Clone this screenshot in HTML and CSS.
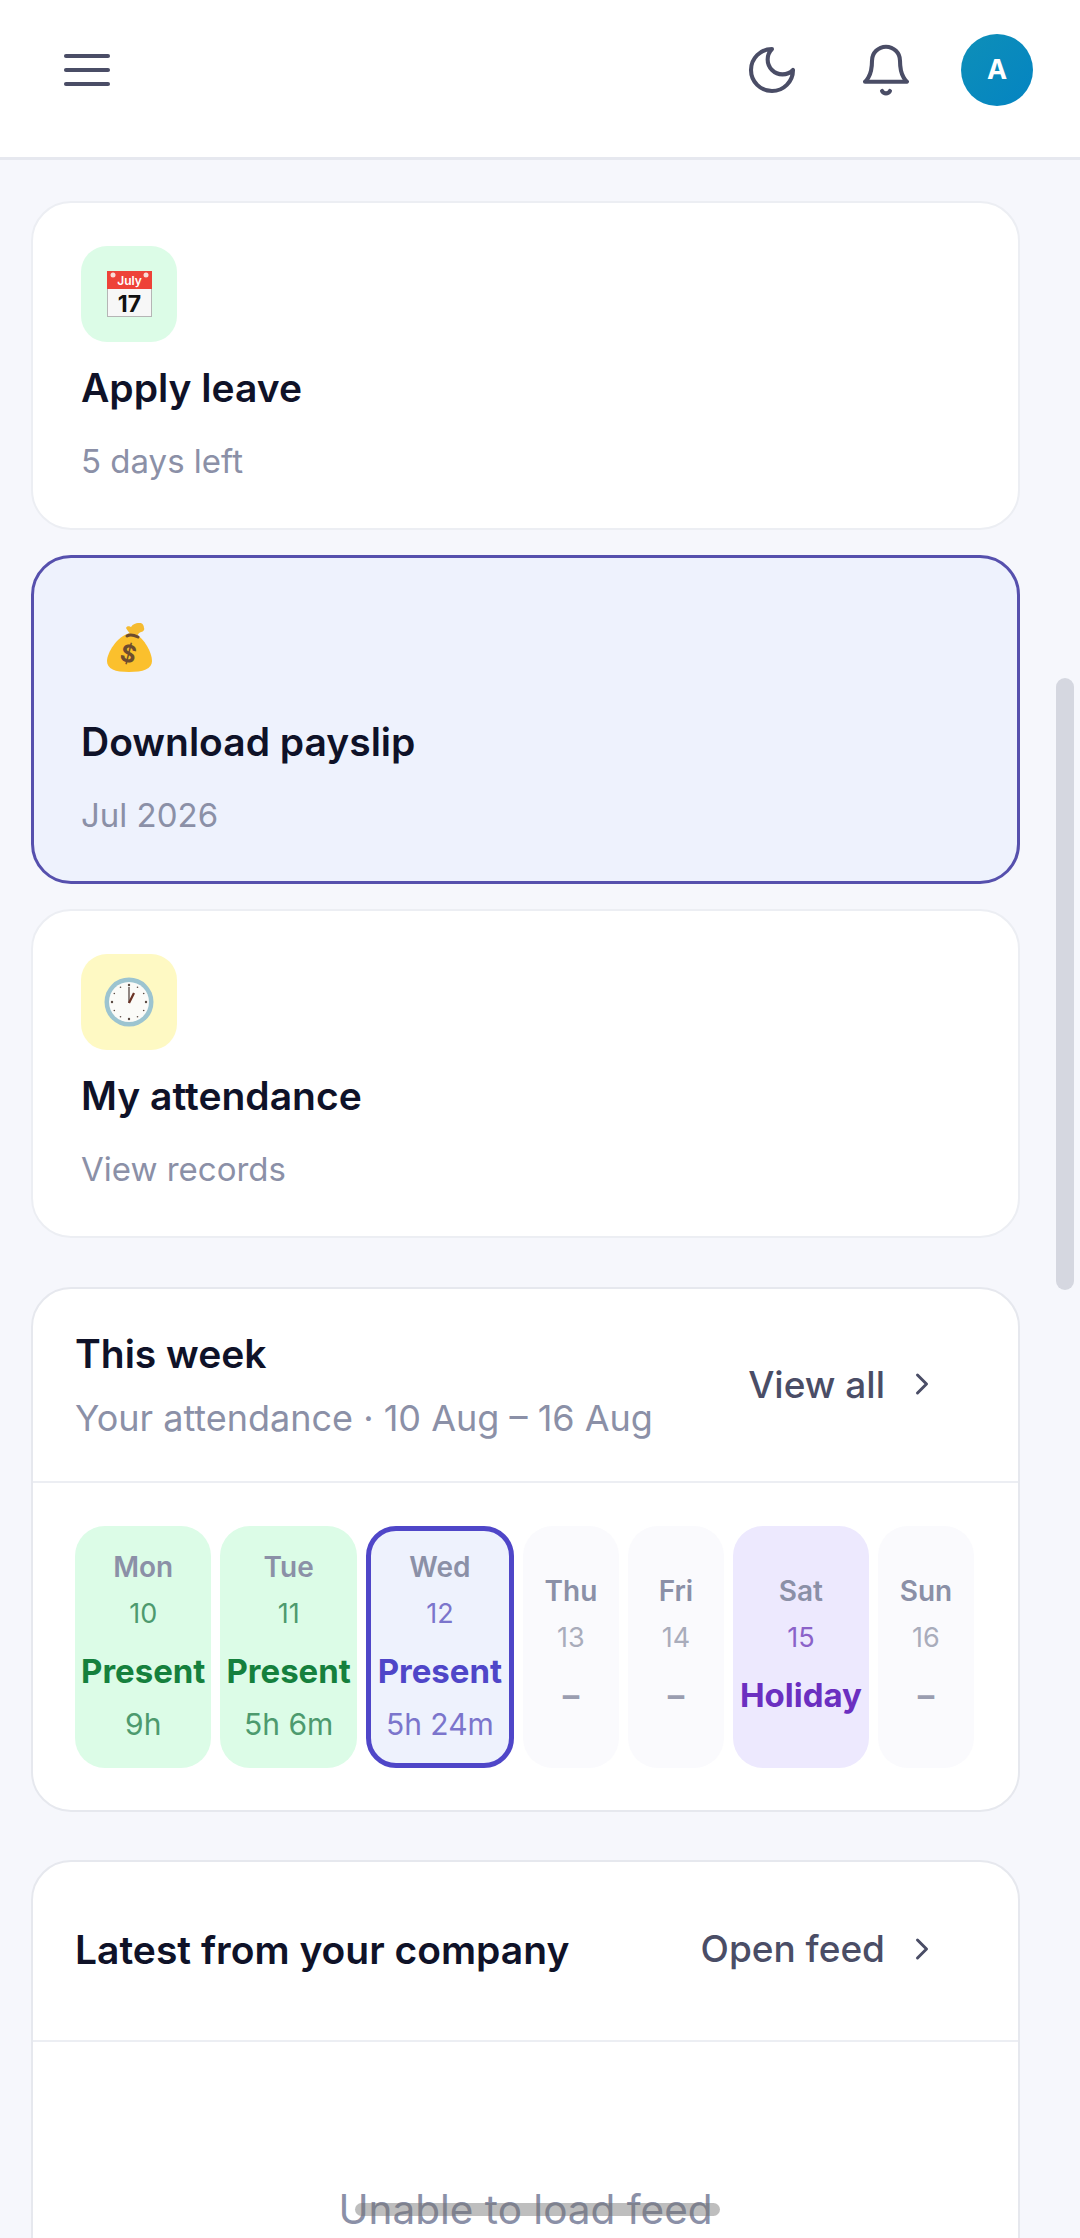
FILE: index.html
```html
<!DOCTYPE html>
<html>

<head>
  <meta charset="utf-8">
  <title>Home</title>
  <meta name="viewport" content="width=device-width, initial-scale=1">
  <link rel="stylesheet" href="styles.css">
</head>

<body>

  <header class="top-bar">
    <button class="icon-btn">
      <svg viewBox="0 0 24 24"><path d="M3 6h18M3 12h18M3 18h18" /></svg>
    </button>
    <div class="top-actions">
      <button class="icon-btn">
        <svg viewBox="0 0 24 24"><path d="M12 3a6 6 0 0 0 9 9 9 9 0 1 1-9-9Z" /></svg>
      </button>
      <button class="icon-btn">
        <svg viewBox="0 0 24 24"><path d="M6 8a6 6 0 0 1 12 0c0 7 3 9 3 9H3s3-2 3-9" /><path d="M10.3 21a1.94 1.94 0 0 0 3.4 0" /></svg>
      </button>
      <div class="avatar">A</div>
    </div>
  </header>

  <main class="content">

    <section class="action-card">
      <div class="emoji-box green">
        <svg class="emoji-cal" viewBox="0 0 45 46">
          <rect x="0.5" y="0.5" width="44" height="45" fill="#f7f7f7" stroke="#b5b5b5" />
          <rect x="0" y="0" width="45" height="18" fill="#ee4238" />
          <circle cx="6" cy="4" r="2.5" fill="#f9dcd6" />
          <circle cx="39" cy="4" r="2.5" fill="#f9dcd6" />
          <text x="22.5" y="14" class="cal-month">July</text>
          <text x="22.5" y="41" class="cal-day">17</text>
        </svg>
      </div>
      <h2>Apply leave</h2>
      <p>5 days left</p>
    </section>

    <section class="action-card active">
      <div class="emoji-box">
        <svg class="emoji-bag" viewBox="0 0 45 50">
          <path d="M23 10C10 13 0 30 0 38c0 8 8 11 22 11s23-3 23-11c0-9-8-22-16-27Z" fill="#fbc02d" />
          <path d="M24 12c-2-3-4-5-5-7 2-3 4-1 5-1 2-3 5-4 7-4 4-1 6 2 6 5 1 2-1 4-3 4-3 1-4 4-5 6Z" fill="#f5bb30" />
          <path d="M20 13c3-2 7-1 11 1" fill="none" stroke="#6d4c2f" stroke-width="3" stroke-linecap="round" />
          <text x="21" y="39" class="bag-sign" transform="rotate(14 21 32)">$</text>
        </svg>
      </div>
      <h2>Download payslip</h2>
      <p>Jul 2026</p>
    </section>

    <section class="action-card">
      <div class="emoji-box yellow">
        <svg class="emoji-clock" viewBox="0 0 50 50">
          <circle cx="25" cy="25" r="24.5" fill="#9cc4d0" />
          <circle cx="25" cy="25" r="20" fill="#fbfbf8" />
          <g fill="#5b4a42">
            <circle cx="25" cy="8" r="1.2" />
            <circle cx="25" cy="42" r="1.2" />
            <circle cx="8" cy="25" r="1.2" />
            <circle cx="42" cy="25" r="1.2" />
            <circle cx="16.500" cy="10.300" r="0.8" />
            <circle cx="33.500" cy="10.300" r="0.8" />
            <circle cx="10.300" cy="16.500" r="0.8" />
            <circle cx="39.700" cy="16.500" r="0.8" />
            <circle cx="10.300" cy="33.500" r="0.8" />
            <circle cx="39.700" cy="33.500" r="0.8" />
            <circle cx="16.500" cy="39.700" r="0.8" />
            <circle cx="33.500" cy="39.700" r="0.8" />
          </g>
          <path d="M25 26V10" stroke="#4a3a34" stroke-width="1.2" fill="none" />
          <path d="M25 26l5-10" stroke="#6b3325" stroke-width="2.2" fill="none" />
        </svg>
      </div>
      <h2>My attendance</h2>
      <p>View records</p>
    </section>

    <section class="panel week-panel">
      <div class="panel-head">
        <div>
          <h3>This week</h3>
          <p class="panel-sub">Your attendance · 10 Aug – 16 Aug</p>
        </div>
        <a class="panel-link">View all
          <svg viewBox="0 0 24 24"><path d="m9 18 6-6-6-6" /></svg>
        </a>
      </div>
      <div class="week-days">
        <div class="day present">
          <span class="day-name">Mon</span>
          <span class="day-num">10</span>
          <span class="day-status">Present</span>
          <span class="day-time">9h</span>
        </div>
        <div class="day present">
          <span class="day-name">Tue</span>
          <span class="day-num">11</span>
          <span class="day-status">Present</span>
          <span class="day-time">5h 6m</span>
        </div>
        <div class="day today">
          <span class="day-name">Wed</span>
          <span class="day-num">12</span>
          <span class="day-status">Present</span>
          <span class="day-time">5h 24m</span>
        </div>
        <div class="day no-time">
          <span class="day-name">Thu</span>
          <span class="day-num">13</span>
          <span class="day-status">–</span>
        </div>
        <div class="day no-time">
          <span class="day-name">Fri</span>
          <span class="day-num">14</span>
          <span class="day-status">–</span>
        </div>
        <div class="day no-time holiday">
          <span class="day-name">Sat</span>
          <span class="day-num">15</span>
          <span class="day-status">Holiday</span>
        </div>
        <div class="day no-time">
          <span class="day-name">Sun</span>
          <span class="day-num">16</span>
          <span class="day-status">–</span>
        </div>
      </div>
    </section>

    <section class="panel feed-panel">
      <div class="panel-head feed-head">
        <h3>Latest from your company</h3>
        <a class="panel-link">Open feed
          <svg viewBox="0 0 24 24"><path d="m9 18 6-6-6-6" /></svg>
        </a>
      </div>
      <p class="feed-empty">Unable to load feed</p>
    </section>

  </main>

  <div class="scroll-thumb"></div>
  <div class="home-bar"></div>

</body>

</html>
```

FILE: styles.css
```css
* {
  box-sizing: border-box;
}

html,
body {
  height: 2238px;
  overflow: hidden;
}

body {
  position: relative;
  margin: 0;
  background: #f6f7fc;
  color: #0f1228;
  font-family: Inter, "Liberation Sans", sans-serif;
}

h2,
h3,
p {
  margin: 0;
}

/* top bar */

.top-bar {
  display: flex;
  align-items: center;
  justify-content: space-between;
  height: 160px;
  padding: 0 47px 18px 59px;
  background: #fff;
  border-bottom: 3px solid #e6e8ef;
}

.top-actions {
  display: flex;
  align-items: center;
}

.icon-btn {
  display: block;
  width: 56px;
  height: 56px;
  padding: 0;
  border: 0;
  background: none;
}

.icon-btn + .icon-btn {
  margin-left: 58px;
}

.icon-btn svg {
  display: block;
  width: 56px;
  height: 56px;
  fill: none;
  stroke: #4a4d66;
  stroke-width: 1.75;
  stroke-linecap: round;
  stroke-linejoin: round;
}

.avatar {
  display: flex;
  align-items: center;
  justify-content: center;
  width: 72px;
  height: 72px;
  margin-left: 47px;
  border-radius: 50%;
  background: linear-gradient(135deg, #0e8fb8, #0484c2);
  color: #fff;
  font-size: 27px;
  font-weight: 700;
}

/* cards */

.content {
  width: 989px;
  margin-left: 31px;
  padding-top: 41px;
}

.action-card {
  height: 329px;
  margin-bottom: 25px;
  padding: 43px 48px 0;
  background: #fff;
  border: 2px solid #eceef3;
  border-radius: 40px;
}

.action-card.active {
  background: #eef2fd;
  border: 3px solid #5650ad;
  padding: 42px 47px 0;
}

.action-card h2 {
  margin-top: 20px;
  font-size: 39px;
  line-height: 52px;
  font-weight: 600;
}

.action-card p {
  margin-top: 25px;
  color: #8b90a7;
  font-size: 33px;
  line-height: 44px;
}

.emoji-box {
  display: flex;
  align-items: center;
  justify-content: center;
  width: 96px;
  height: 96px;
  border-radius: 26px;
}

.emoji-box.green {
  background: #dcfce7;
}

.emoji-box.yellow {
  background: #fef9c3;
}

.emoji-cal {
  width: 45px;
  height: 46px;
}

.emoji-bag {
  width: 45px;
  height: 50px;
}

.emoji-clock {
  width: 50px;
  height: 50px;
}

.cal-month {
  fill: #fff;
  font-size: 12px;
  font-weight: 600;
  text-anchor: middle;
}

.cal-day {
  fill: #111;
  font-size: 23px;
  font-weight: 700;
  text-anchor: middle;
}

.bag-sign {
  fill: #6d4c2f;
  font-size: 24px;
  font-weight: 700;
  text-anchor: middle;
}

/* panels */

.panel {
  background: #fff;
  border: 2px solid #e6e8ee;
  border-radius: 40px;
}

.week-panel {
  height: 525px;
  margin-top: 49px;
}

.feed-panel {
  height: 600px;
  margin-top: 48px;
}

.panel-head {
  display: flex;
  align-items: center;
  justify-content: space-between;
  height: 194px;
  padding: 0 91px 0 42px;
  border-bottom: 2px solid #eceef3;
}

.feed-head {
  height: 180px;
  padding-bottom: 3px;
}

.panel-head h3 {
  font-size: 39px;
  line-height: 50px;
  font-weight: 600;
}

.panel-sub {
  margin-top: 16px;
  color: #8b90a7;
  font-size: 36px;
  line-height: 46px;
}

.panel-link {
  display: flex;
  align-items: center;
  margin-bottom: 2px;
  color: #4a4d66;
  font-size: 37px;
  font-weight: 500;
}

.panel-link svg {
  width: 36px;
  height: 36px;
  margin-left: 19px;
  margin-right: -13px;
  fill: none;
  stroke: #4a4d66;
  stroke-width: 2;
  stroke-linecap: round;
  stroke-linejoin: round;
}

/* week strip */

.week-days {
  display: flex;
  gap: 9px;
  padding: 43px 42px 0;
}

.day {
  display: flex;
  flex-direction: column;
  align-items: center;
  justify-content: center;
  flex: none;
  min-width: 96px;
  height: 242px;
  padding: 0 7px 2px;
  background: #fafafd;
  border-radius: 30px;
  color: #9a9db0;
}

.day span {
  display: block;
  white-space: nowrap;
}

.day.no-time {
  padding-top: 4px;
}

.day-name {
  height: 42px;
  color: #8b90a7;
  font-size: 28px;
  line-height: 42px;
  font-weight: 600;
}

.day-num {
  height: 52px;
  color: #a9acbb;
  font-size: 27px;
  line-height: 52px;
}

.day-status {
  height: 62px;
  font-size: 33px;
  line-height: 62px;
  font-weight: 700;
}

.day-time {
  height: 44px;
  font-size: 30px;
  line-height: 44px;
}

.day.present {
  padding: 0 6px 2px;
  background: #dcfce7;
}

.day.present .day-num,
.day.present .day-time {
  color: #4d9a6e;
}

.day.present .day-status {
  color: #15803d;
}

.day.today {
  padding: 0 0 2px;
  width: 148px;
  background: #eef2fd;
  border: 5px solid #4f46c8;
}

.day.today .day-num,
.day.today .day-time {
  color: #7b75cc;
}

.day.today .day-status {
  color: #4f46c8;
}

.day.holiday {
  background: #ede9fe;
}

.day.holiday .day-num {
  color: #8b62c9;
}

.day.holiday .day-status {
  color: #6b2fc0;
}

/* feed */

.feed-empty {
  margin-top: 143px;
  color: #8b90a7;
  font-size: 40.500px;
  line-height: 50px;
  text-align: center;
}

/* overlays */

.scroll-thumb {
  position: absolute;
  top: 678px;
  left: 1056px;
  width: 18px;
  height: 612px;
  border-radius: 9px;
  background: #d5d7e0;
}

.home-bar {
  position: absolute;
  top: 2203px;
  left: 355px;
  width: 365px;
  height: 13px;
  border-radius: 7px;
  background: rgba(110, 110, 110, 0.45);
}
```
